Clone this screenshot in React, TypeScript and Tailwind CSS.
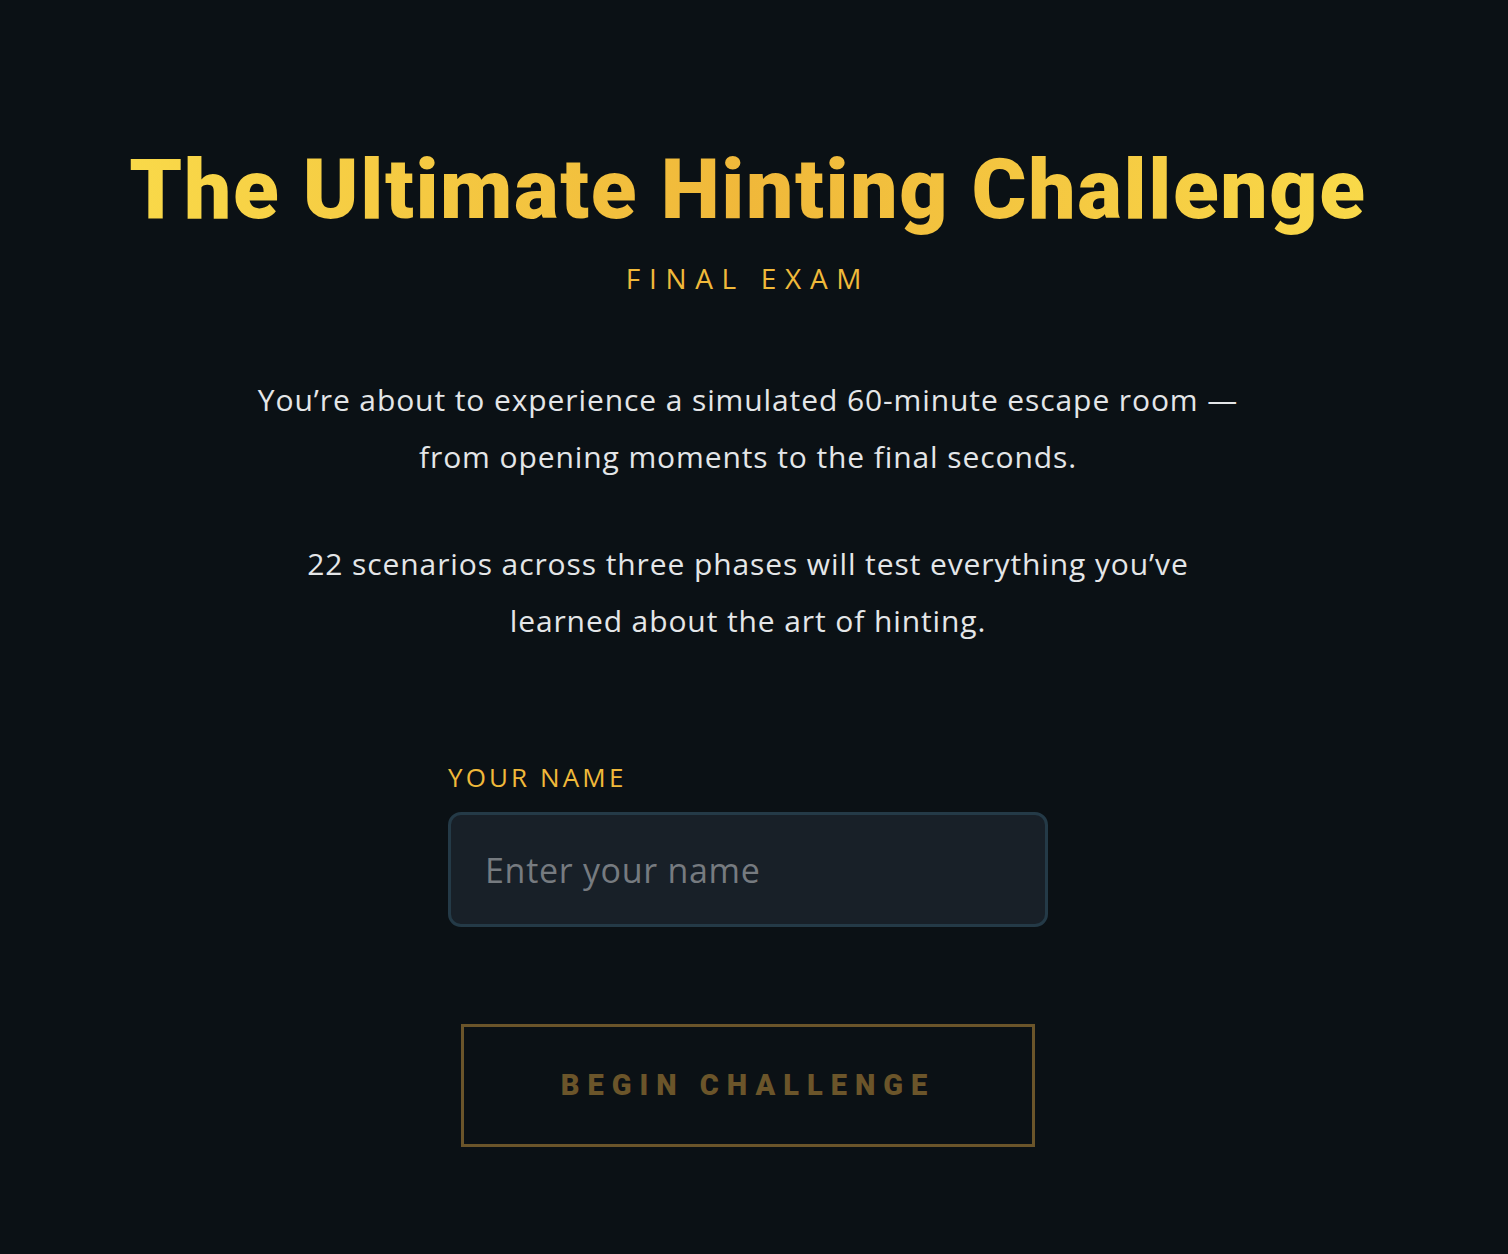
import React from "react";

export default function App() {
  return (
    <div className="min-h-[1254px] w-full bg-[#0b1115] flex flex-col items-center pt-[140px] pb-[100px] pr-[12px]">
      <h1 className="text-[84px] leading-[100px] font-black text-center tracking-[1.6px] bg-gradient-to-r from-[#f9d949] via-[#f0b83a] to-[#f9d949] bg-clip-text text-transparent [font-family:'Roboto',sans-serif]">
        The Ultimate Hinting Challenge
      </h1>
      <div className="mt-[22px] text-[28px] leading-[32px] tracking-[0.31em] text-[#f0b93a] [font-family:'Open_Sans',sans-serif] font-normal">
        FINAL EXAM
      </div>
      <div className="mt-[77px] max-w-[990px] text-center text-[30px] leading-[57px] tracking-[0.9px] text-[#e4e6e8] [font-family:'Open_Sans',sans-serif] font-normal">
        <p>You’re about to experience a simulated 60-minute escape room — from opening moments to the final seconds.</p>
        <p className="mt-[50px]">22 scenarios across three phases will test everything you’ve learned about the art of hinting.</p>
      </div>
      <div className="mt-[113px] w-[600px] flex flex-col">
        <label className="text-[26px] leading-[30px] tracking-[0.12em] text-[#f0b93a] [font-family:'Open_Sans',sans-serif]">
          YOUR NAME
        </label>
        <input
          type="text"
          placeholder="Enter your name"
          className="mt-[20px] h-[115px] w-[600px] rounded-[13px] border-[3px] border-[#243a47] bg-[#182028] px-[34px] text-[34px] tracking-[0.7px] text-[#e4e6e8] placeholder:text-[#767b80] outline-none [font-family:'Open_Sans',sans-serif] font-normal"
        />
      </div>
      <button className="mt-[97px] w-[574px] h-[123px] border-[3px] border-[#6b552a] text-[#6b552a] text-[29px] font-black tracking-[8px] [font-family:'Roboto',sans-serif]">
        BEGIN CHALLENGE
      </button>
    </div>
  );
}
